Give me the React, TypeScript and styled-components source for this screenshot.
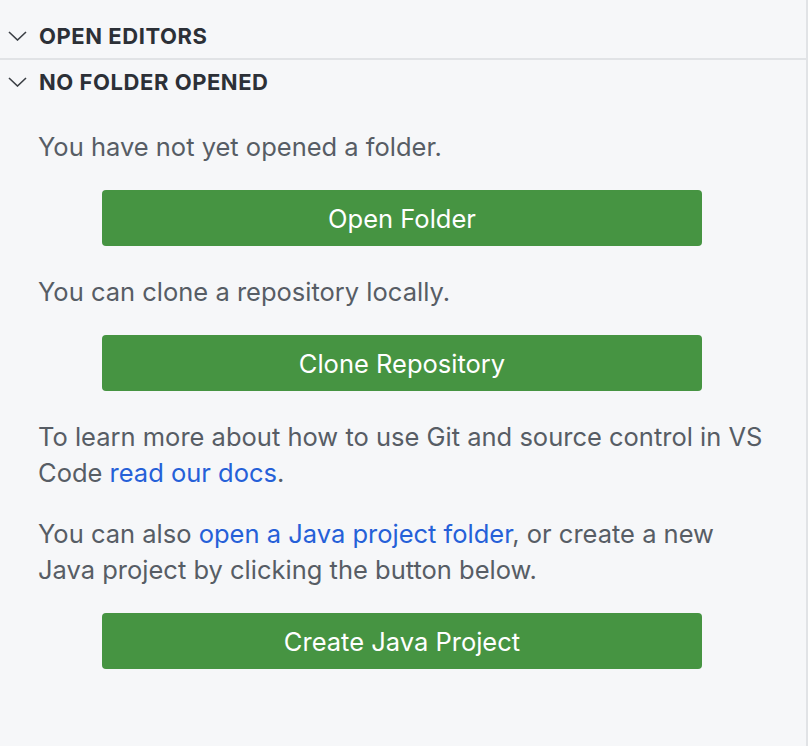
import React from 'react';
import styled, { createGlobalStyle } from 'styled-components';

const GlobalStyle = createGlobalStyle`
  html, body {
    margin: 0;
    padding: 0;
    background: #f6f7f9;
  }
  body {
    font-family: Inter, "Noto Sans", "Liberation Sans", sans-serif;
  }
`;

const SideBar = styled.div`
  box-sizing: border-box;
  width: 808px;
  height: 746px;
  padding-top: 14px;
  background: #f6f7f9;
  border-right: 2px solid #e1e3e6;
  display: flex;
  flex-direction: column;
`;

const Pane = styled.section<{ $divider?: boolean }>`
  display: flex;
  flex-direction: column;
  border-top: ${(p) => (p.$divider ? '2px solid #e1e3e6' : 'none')};
`;

const PaneHeader = styled.div`
  height: 44px;
  display: flex;
  align-items: center;
  padding-left: 8px;
  gap: 12px;
  color: #2c3037;
  font-size: 22px;
  font-weight: 700;
  letter-spacing: 0.55px;
  text-transform: uppercase;
`;

const Chevron = styled.svg`
  width: 19px;
  height: 10px;
  flex: none;
`;

const Body = styled.div`
  display: flex;
  flex-direction: column;
  padding: 0 40px 0 38px;
`;

const Text = styled.p`
  margin: 25px 0 0;
  font-size: 25.5px;
  line-height: 36px;
  color: #575d65;
`;

const Link = styled.a`
  color: #2560d8;
  text-decoration: none;
`;

const Button = styled.button`
  align-self: center;
  width: 600px;
  height: 56px;
  margin: 25px 0 3px;
  border: none;
  border-radius: 4px;
  background: #469442;
  color: #ffffff;
  font-family: inherit;
  font-size: 25.5px;
  cursor: pointer;
`;

const ChevronDown = () => (
  <Chevron viewBox="0 0 19 10" fill="none">
    <path d="M1 1 L9.5 9 L18 1" stroke="#3b3f45" strokeWidth="1.6" />
  </Chevron>
);

export default function App() {
  return (
    <>
      <GlobalStyle />
      <SideBar>
        <Pane>
          <PaneHeader>
            <ChevronDown />
            Open Editors
          </PaneHeader>
        </Pane>
        <Pane $divider>
          <PaneHeader>
            <ChevronDown />
            No Folder Opened
          </PaneHeader>
          <Body>
            <Text>You have not yet opened a folder.</Text>
            <Button>Open Folder</Button>
            <Text>You can clone a repository locally.</Text>
            <Button>Clone Repository</Button>
            <Text>
              To learn more about how to use Git and source control in VS Code{' '}
              <Link href="#">read our docs</Link>.
            </Text>
            <Text>
              You can also <Link href="#">open a Java project folder</Link>, or create a new
              Java project by clicking the button below.
            </Text>
            <Button>Create Java Project</Button>
          </Body>
        </Pane>
      </SideBar>
    </>
  );
}
